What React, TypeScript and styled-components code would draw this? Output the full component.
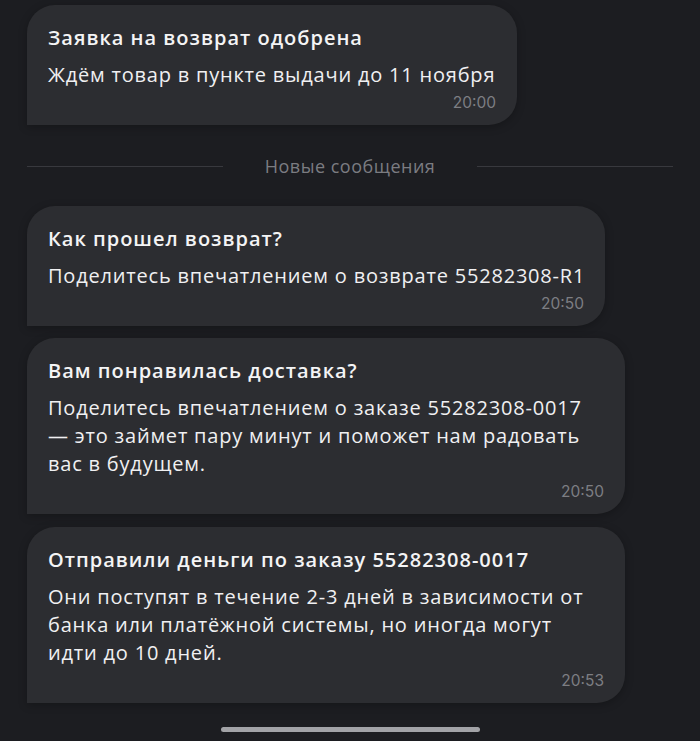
import React from "react";
import styled, { createGlobalStyle } from "styled-components";

const Global = createGlobalStyle`
  html, body { margin: 0; padding: 0; background: #1c1d21; }
  body { font-family: "Open Sans", "Noto Sans", sans-serif; -webkit-font-smoothing: antialiased; }
`;

const Screen = styled.div`
  width: 700px;
  height: 741px;
  box-sizing: border-box;
  background: #1c1d21;
  padding: 5px 27px 0 27px;
  display: flex;
  flex-direction: column;
  overflow: hidden;
`;

const Bubble = styled.div<{ $w: number; $mt?: number }>`
  width: ${(p) => p.$w}px;
  box-sizing: border-box;
  margin-top: ${(p) => p.$mt ?? 0}px;
  background: #2c2d31;
  border-radius: 28px 28px 28px 0;
  padding: 19px 21px 13px 21px;
  display: flex;
  flex-direction: column;
  box-shadow: 0 2px 8px rgba(0, 0, 0, 0.25);
`;

const Title = styled.div`
  color: #f4f4f5;
  font-family: "Open Sans", "Noto Sans", sans-serif;
  font-weight: 600;
  font-size: 20px;
  letter-spacing: 1px;
  line-height: 28px;
  white-space: nowrap;
`;

const Text = styled.div`
  color: #f0f0f2;
  font-family: "Open Sans", "Noto Sans", sans-serif;
  font-weight: 400;
  font-size: 20px;
  letter-spacing: 0.8px;
  line-height: 28px;
  margin-top: 9px;
  white-space: nowrap;
`;

const Time = styled.div`
  align-self: flex-end;
  color: #7d7e83;
  font-family: Inter, Roboto, sans-serif;
  font-size: 15.5px;
  line-height: 18px;
  margin-top: 5px;
`;

const Divider = styled.div`
  display: flex;
  align-items: center;
  gap: 42px;
  margin: 29px 0 28px;
  height: 24px;
`;

const Rule = styled.div`
  flex: 1;
  height: 1px;
  background: #38393e;
`;

const DividerLabel = styled.span`
  color: #7b7c81;
  font-family: "Open Sans", "Noto Sans", sans-serif;
  font-size: 18px;
  letter-spacing: 0.5px;
`;

const HomeBar = styled.div`
  align-self: center;
  width: 259px;
  height: 5px;
  border-radius: 3px;
  background: #a2a3a7;
  margin-top: 24px;
`;

type Msg = { title: string; lines: string[]; time: string; w: number; mt?: number };

const first: Msg = {
  title: "Заявка на возврат одобрена",
  lines: ["Ждём товар в пункте выдачи до 11 ноября"],
  time: "20:00",
  w: 490,
};

const fresh: Msg[] = [
  {
    title: "Как прошел возврат?",
    lines: ["Поделитесь впечатлением о возврате 55282308-R1"],
    time: "20:50",
    w: 578,
  },
  {
    title: "Вам понравилась доставка?",
    lines: [
      "Поделитесь впечатлением о заказе 55282308-0017",
      "— это займет пару минут и поможет нам радовать",
      "вас в будущем.",
    ],
    time: "20:50",
    w: 598,
    mt: 12,
  },
  {
    title: "Отправили деньги по заказу 55282308-0017",
    lines: [
      "Они поступят в течение 2-3 дней в зависимости от",
      "банка или платёжной системы, но иногда могут",
      "идти до 10 дней.",
    ],
    time: "20:53",
    w: 598,
    mt: 13,
  },
];

const Message = ({ m }: { m: Msg }) => (
  <Bubble $w={m.w} $mt={m.mt}>
    <Title>{m.title}</Title>
    <Text>
      {m.lines.map((l, i) => (
        <React.Fragment key={i}>
          {i > 0 && <br />}
          {l}
        </React.Fragment>
      ))}
    </Text>
    <Time>{m.time}</Time>
  </Bubble>
);

export default function App() {
  return (
    <>
      <Global />
      <Screen>
        <Message m={first} />
        <Divider>
          <Rule />
          <DividerLabel>Новые сообщения</DividerLabel>
          <Rule />
        </Divider>
        {fresh.map((m, i) => (
          <Message key={i} m={m} />
        ))}
        <HomeBar />
      </Screen>
    </>
  );
}
